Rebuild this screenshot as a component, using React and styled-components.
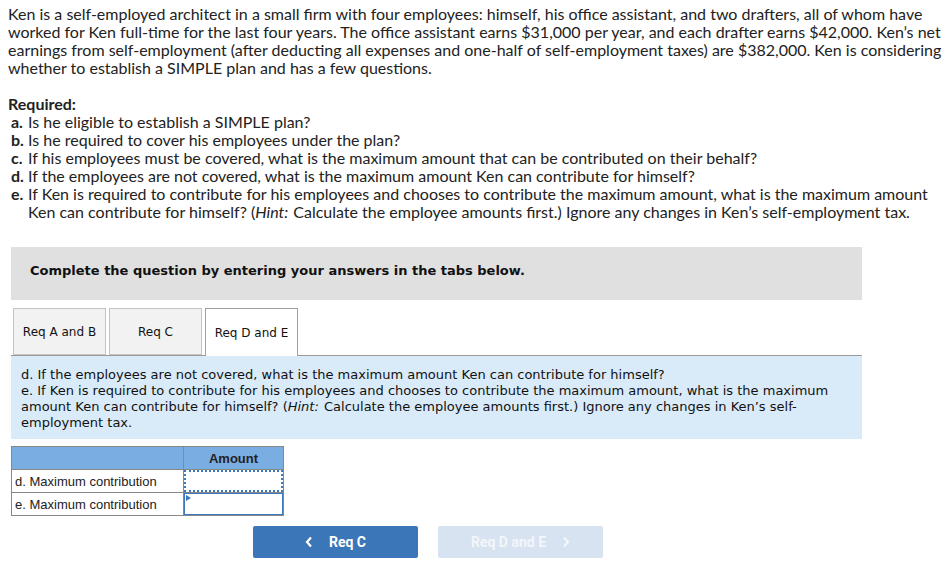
import React from "react";
import styled, { createGlobalStyle } from "styled-components";

const Global = createGlobalStyle`
  html, body { margin: 0; padding: 0; background: #fff; }
  body { font-family: Lato, "Liberation Sans", sans-serif; color: #222; }
`;

const Page = styled.div`
  padding: 5px 0 0 8px;
  width: 949px;
  box-sizing: border-box;
`;

const Intro = styled.p`
  margin: 0;
  font-family: Lato, sans-serif;
  font-size: 16px;
  line-height: 18px;
  color: #222;
  white-space: nowrap;
`;

const Required = styled.div`
  margin-top: 18px;
  font-family: Lato, sans-serif;
  font-size: 16px;
  line-height: 18px;
  white-space: nowrap;
`;

const ReqTitle = styled.div`
  font-weight: 700;
`;

const ReqList = styled.ol`
  list-style: none;
  margin: 0;
  padding: 0 0 0 3px;
`;

const ReqItem = styled.li`
  display: grid;
  grid-template-columns: 17px 1fr;
`;

const ReqLetter = styled.b`
  font-weight: 700;
`;

const Hint = styled.i`
  padding-right: 1px;
`;

const Work = styled.div`
  margin: 26px 0 0 3px;
  width: 851px;
`;

const Banner = styled.div`
  background: #e0e0e0;
  height: 53px;
  box-sizing: border-box;
  padding: 0 0 6px 19px;
  display: flex;
  align-items: center;
  font-family: "DejaVu Sans", Verdana, sans-serif;
  font-weight: 700;
  font-size: 13px;
  color: #111;
`;

const Tabs = styled.div`
  margin-top: 8px;
  display: flex;
  gap: 3px;
  padding-left: 2px;
  border-bottom: 1px solid #9a9a9a;
  height: 47px;
  box-sizing: content-box;
`;

const Tab = styled.div`
  width: 93px;
  box-sizing: border-box;
  height: ${(p) => (p.$active ? "48px" : "47px")};
  border: 1px solid ${(p) => (p.$active ? "#a0a0a0" : "#c4c4c4")};
  border-bottom: ${(p) => (p.$active ? "none" : "1px solid #c4c4c4")};
  background: ${(p) => (p.$active ? "#fff" : "#f2f2f2")};
  display: flex;
  align-items: center;
  justify-content: center;
  font-family: "DejaVu Sans", Verdana, sans-serif;
  font-size: 12px;
  color: #111;
  position: relative;
  z-index: 1;
`;

const Question = styled.div`
  background: #d9ebf9;
  padding: 11px 10px 8px 10px;
  font-family: "DejaVu Sans", Verdana, sans-serif;
  font-size: 13px;
  line-height: 16px;
  color: #111;
`;

const Table = styled.table`
  margin-top: 7px;
  border-collapse: collapse;
  font-family: "Liberation Sans", Arial, sans-serif;
  font-size: 13px;
  color: #222;
`;

const HeadCell = styled.th`
  background: #7aaee3;
  border: 1px solid #888;
  height: 22px;
  padding: 0;
  font-weight: 700;
  font-size: 13px;
  text-align: center;
  width: ${(p) => p.$w}px;
`;

const LabelCell = styled.td`
  border: 1px solid #888;
  height: 22px;
  padding: 0 0 0 3px;
`;

const InputCell = styled.td`
  border: 1px solid #888;
  padding: 0;
  height: 22px;
  position: relative;
`;

const Field = styled.div`
  box-sizing: border-box;
  height: 22px;
  width: 100%;
  border: ${(p) => (p.$focus ? "2px dotted #3b78bd" : "1px solid #3b78bd")};
  background: #fff;
`;

const Marker = styled.span`
  position: absolute;
  left: 2px;
  top: 2px;
  width: 0;
  height: 0;
  border-left: 5px solid #3b78bd;
  border-top: 3px solid transparent;
  border-bottom: 3px solid transparent;
`;

const Nav = styled.div`
  margin-top: 10px;
  display: flex;
  gap: 20px;
  padding-left: 242px;
`;

const NavButton = styled.button`
  width: 165px;
  height: 32px;
  border: none;
  border-radius: 2px;
  background: ${(p) => (p.$disabled ? "#d7e3f0" : "#3a76b8")};
  color: ${(p) => (p.$disabled ? "#f3f6fa" : "#fff")};
  font-family: Roboto, "Liberation Sans", sans-serif;
  font-weight: 700;
  font-size: 14px;
  display: flex;
  align-items: center;
  justify-content: center;
  gap: 16px;
  padding: 0;
`;

const Chevron = ({ dir }) => (
  <svg width="8" height="12" viewBox="0 0 8 12">
    <path
      d={dir === "left" ? "M6 1.5 L2 6 L6 10.5" : "M2 1.5 L6 6 L2 10.5"}
      fill="none"
      stroke="currentColor"
      strokeWidth="2.2"
    />
  </svg>
);

export default function App() {
  return (
    <Page>
      <Global />
      <Intro>
        Ken is a self-employed architect in a small firm with four employees: himself, his office assistant, and two drafters, all of whom have
        <br />
        worked for Ken full-time for the last four years. The office assistant earns $31,000 per year, and each drafter earns $42,000. Ken’s net
        <br />
        earnings from self-employment (after deducting all expenses and one-half of self-employment taxes) are $382,000. Ken is considering
        <br />
        whether to establish a SIMPLE plan and has a few questions.
      </Intro>
      <Required>
        <ReqTitle>Required:</ReqTitle>
        <ReqList>
          <ReqItem>
            <ReqLetter>a.</ReqLetter>
            <span>Is he eligible to establish a SIMPLE plan?</span>
          </ReqItem>
          <ReqItem>
            <ReqLetter>b.</ReqLetter>
            <span>Is he required to cover his employees under the plan?</span>
          </ReqItem>
          <ReqItem>
            <ReqLetter>c.</ReqLetter>
            <span>If his employees must be covered, what is the maximum amount that can be contributed on their behalf?</span>
          </ReqItem>
          <ReqItem>
            <ReqLetter>d.</ReqLetter>
            <span>If the employees are not covered, what is the maximum amount Ken can contribute for himself?</span>
          </ReqItem>
          <ReqItem>
            <ReqLetter>e.</ReqLetter>
            <span>
              If Ken is required to contribute for his employees and chooses to contribute the maximum amount, what is the maximum amount
              <br />
              Ken can contribute for himself? (<Hint>Hint:</Hint> Calculate the employee amounts first.) Ignore any changes in Ken’s self-employment tax.
            </span>
          </ReqItem>
        </ReqList>
      </Required>
      <Work>
        <Banner>Complete the question by entering your answers in the tabs below.</Banner>
        <Tabs>
          <Tab>Req A and B</Tab>
          <Tab>Req C</Tab>
          <Tab $active>Req D and E</Tab>
        </Tabs>
        <Question>
          d. If the employees are not covered, what is the maximum amount Ken can contribute for himself?
          <br />
          e. If Ken is required to contribute for his employees and chooses to contribute the maximum amount, what is
          the maximum amount Ken can contribute for himself? (<Hint>Hint:</Hint> Calculate the employee amounts first.)
          Ignore any changes in Ken’s self-employment tax.
        </Question>
        <Table>
          <thead>
            <tr>
              <HeadCell $w={171}></HeadCell>
              <HeadCell $w={99}>Amount</HeadCell>
            </tr>
          </thead>
          <tbody>
            <tr>
              <LabelCell>d. Maximum contribution</LabelCell>
              <InputCell>
                <Field $focus />
              </InputCell>
            </tr>
            <tr>
              <LabelCell>e. Maximum contribution</LabelCell>
              <InputCell>
                <Field />
                <Marker />
              </InputCell>
            </tr>
          </tbody>
        </Table>
        <Nav>
          <NavButton>
            <Chevron dir="left" />
            <span>Req C</span>
          </NavButton>
          <NavButton $disabled>
            <span>Req D and E</span>
            <Chevron dir="right" />
          </NavButton>
        </Nav>
      </Work>
    </Page>
  );
}
